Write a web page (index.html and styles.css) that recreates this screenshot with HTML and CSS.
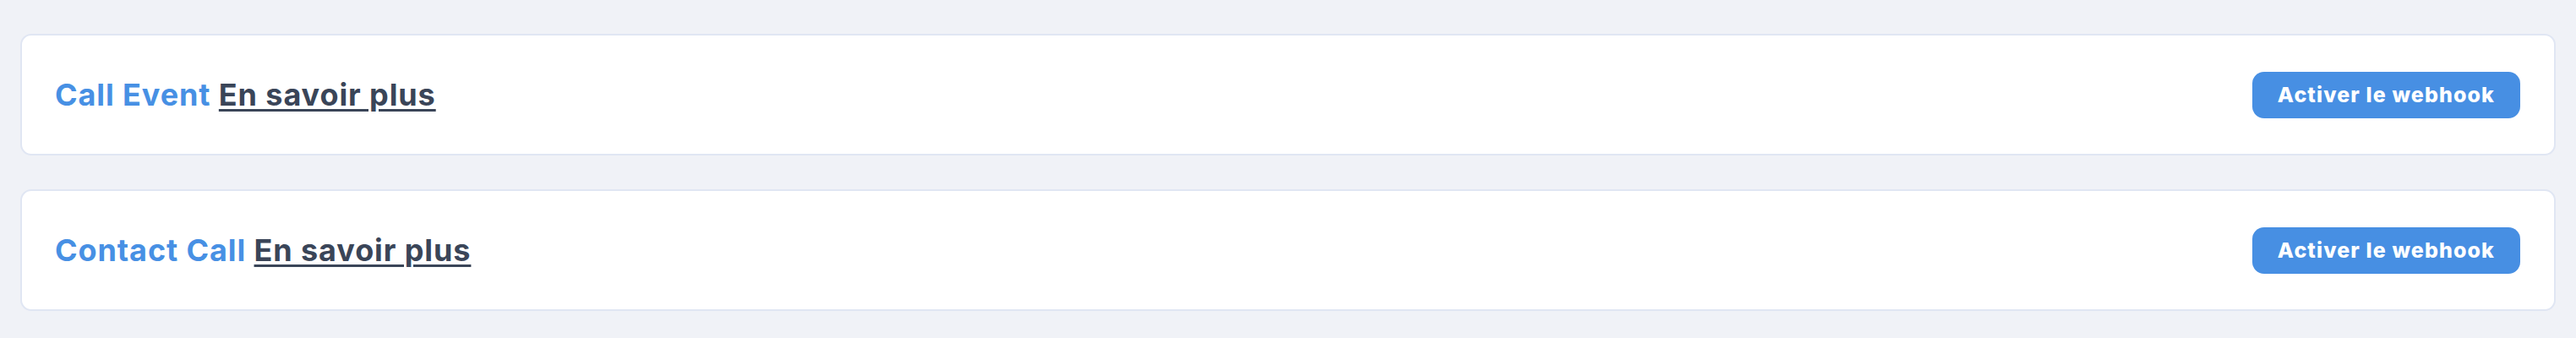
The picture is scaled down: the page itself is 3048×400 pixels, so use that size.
FILE: index.html
```html
<!DOCTYPE html>
<html lang="fr">
<head>
  <meta charset="UTF-8">
  <meta name="viewport" content="width=device-width, initial-scale=1.0">
  <title>Webhooks</title>
  <link rel="stylesheet" href="styles.css">
</head>
<body>
  <div class="liste-webhooks">
    <div class="carte-webhook">
      <h3 class="titre-webhook">Call Event <a href="#">En savoir plus</a></h3>
      <button class="bouton-activer">Activer le webhook</button>
    </div>
    <div class="carte-webhook">
      <h3 class="titre-webhook">Contact Call <a href="#">En savoir plus</a></h3>
      <button class="bouton-activer">Activer le webhook</button>
    </div>
  </div>
</body>
</html>
```

FILE: styles.css
```css
/* Page */
body {
  margin: 0;
  padding: 40px 24px 32px;
  background-color: #f0f2f7;
  font-family: Inter, "Open Sans", sans-serif;
}
.liste-webhooks {
  display: flex;
  flex-direction: column;
  gap: 40px;
}
/* Cartes */
.carte-webhook {
  display: flex;
  align-items: center;
  justify-content: space-between;
  height: 144px;
  box-sizing: border-box;
  padding: 0 40px 0 39px;
  background-color: #fff;
  border: 2px solid #e0e6f3;
  border-radius: 13px;
}
.titre-webhook {
  margin: 0;
  font-size: 36px;
  font-weight: 650;
  line-height: 48px;
  color: #4790e4;
  letter-spacing: 0.9px;
}
.titre-webhook a {
  color: #3a4558;
  text-decoration: underline;
  text-decoration-thickness: 3px;
  text-underline-offset: 4px;
}
.bouton-activer {
  font-family: inherit;
  font-size: 25px;
  font-weight: 800;
  line-height: 32px;
  letter-spacing: 1.1px;
  color: #fff;
  background-color: #478fe3;
  border: none;
  border-radius: 14px;
  padding: 11px 30px 12px;
  cursor: pointer;
}
```
